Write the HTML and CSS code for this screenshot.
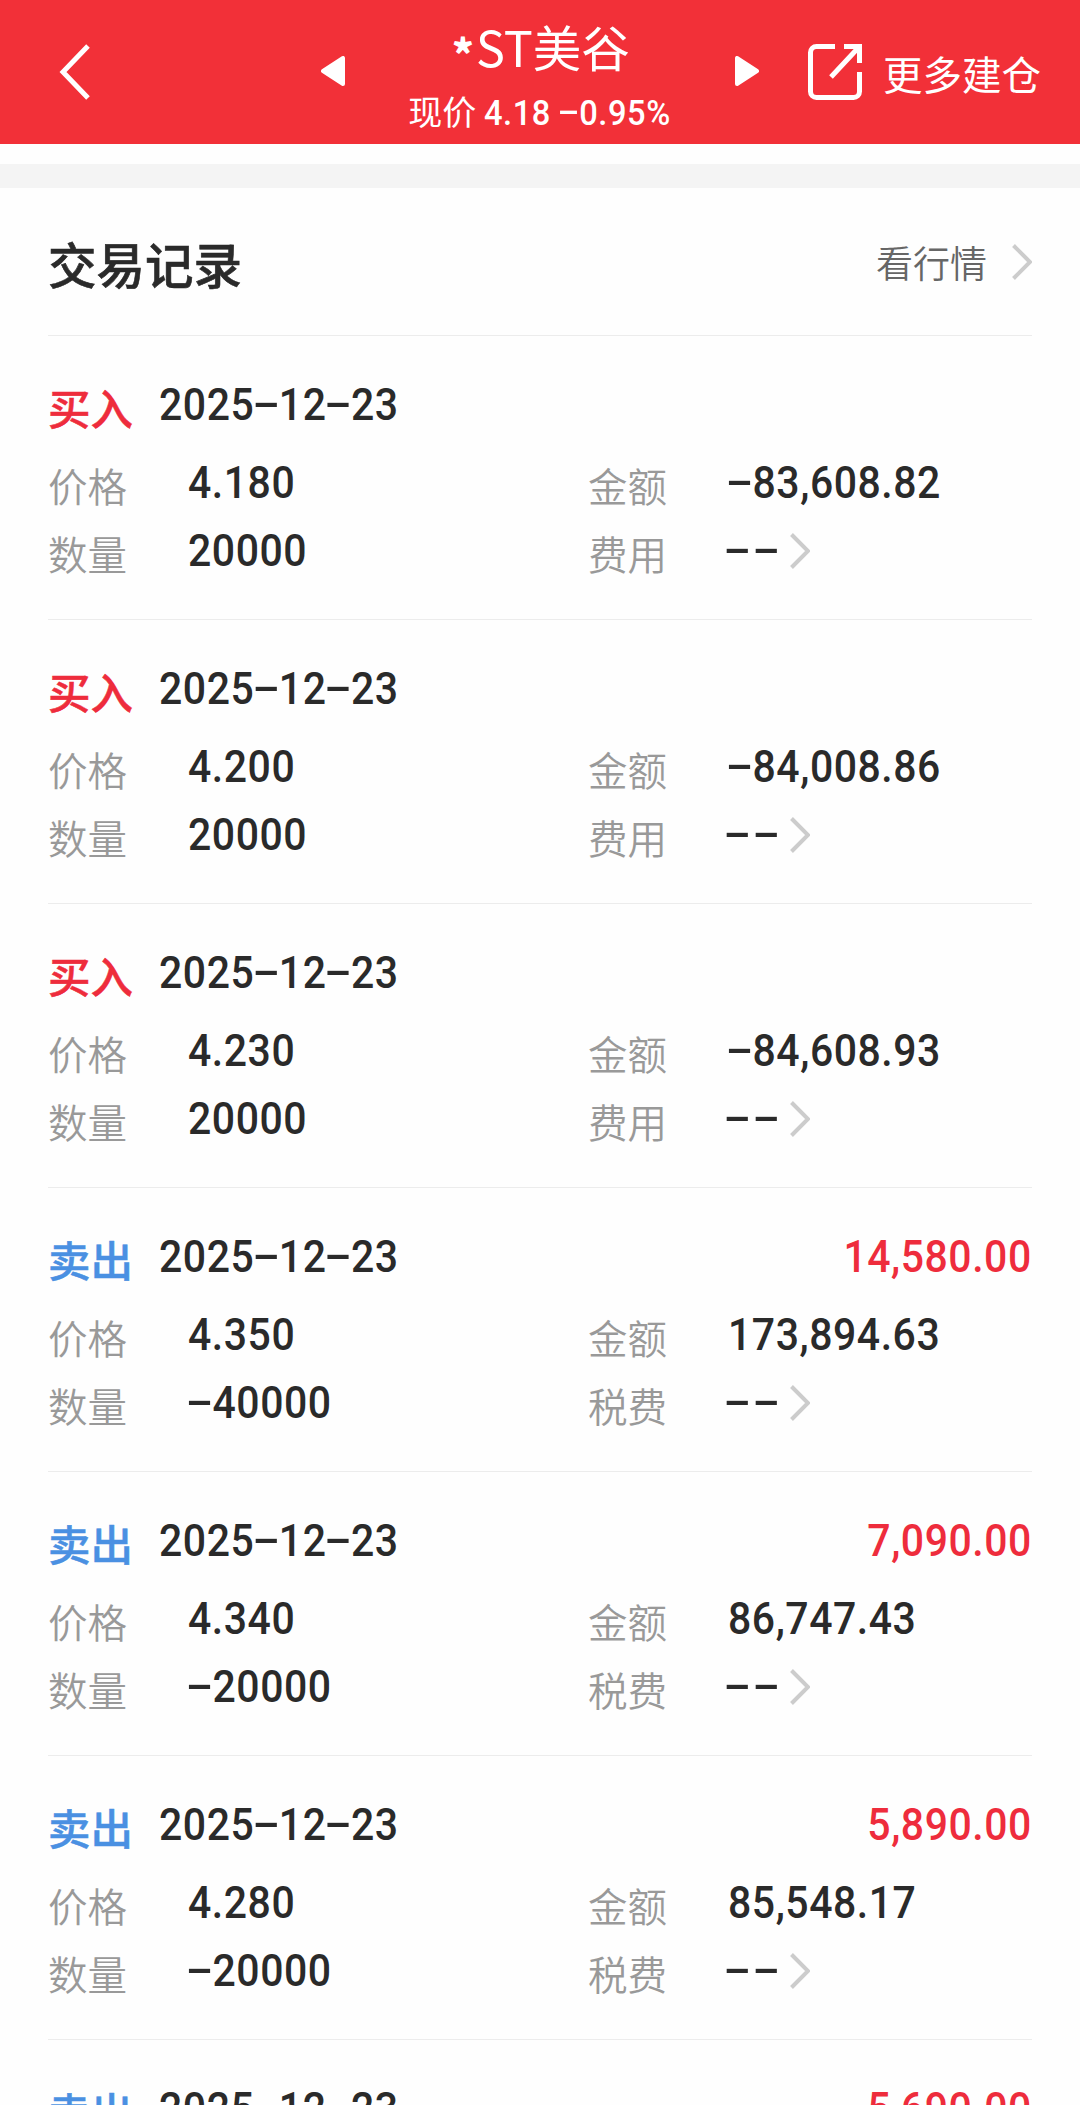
FILE: index.html
```html
<!DOCTYPE html>
<html lang="zh-CN">
	<head>
		<meta charset="utf-8" />
		<meta name="viewport" content="width=device-width, initial-scale=1" />
		<title>*ST美谷 交易记录</title>
		<link rel="stylesheet" href="styles.css">
	</head>
	<body>
		<header>
			<svg class="back" width="32" height="56" viewBox="0 0 32 56"><path d="M29 2 4 28 29 54" /></svg>
			<svg class="arrow prev" width="24" height="30" viewBox="0 0 24 30"><path d="M22 2v26L2 15z" /></svg>
			<div class="stock">
				<h1><span class="star">*</span>ST美谷</h1>
				<p>现价 <b>4.18 <span class="dash">-</span>0.95%</b></p>
			</div>
			<svg class="arrow next" width="24" height="30" viewBox="0 0 24 30"><path d="M2 2v26L22 15z" /></svg>
			<svg class="open" width="54" height="56" viewBox="0 0 54 56"><path d="M27 2.500H8.500a6 6 0 0 0-6 6v39a6 6 0 0 0 6 6h37a6 6 0 0 0 6-6V28M36 2.500h15.500V19M51 3 23 33" /></svg>
			<span class="more">更多建仓</span>
		</header>

		<main>
			<div class="head">
				<h2>交易记录</h2>
				<a>看行情</a>
				<svg class="chevron" width="20" height="36" viewBox="0 0 20 36"><path d="M1.500 1.500 18 18 1.500 34.500" /></svg>
			</div>
			<div id="records"></div>
		</main>

<script>
const records = [
	{ type: 'buy', price: '4.180', count: '20000', amount: '-83,608.82' },
	{ type: 'buy', price: '4.200', count: '20000', amount: '-84,008.86' },
	{ type: 'buy', price: '4.230', count: '20000', amount: '-84,608.93' },
	{ type: 'sell', price: '4.350', count: '-40000', amount: '173,894.63', profit: '14,580.00' },
	{ type: 'sell', price: '4.340', count: '-20000', amount: '86,747.43', profit: '7,090.00' },
	{ type: 'sell', price: '4.280', count: '-20000', amount: '85,548.17', profit: '5,890.00' },
	{ type: 'sell', profit: '5,690.00' },
];

// hyphens are drawn as wide as a digit
function num(s) {
	return s.replace(/-/g, '<span class="dash">-</span>');
}

for (let r of records) {
	let buy = r.type == 'buy';
	let section = document.createElement('section');
	section.innerHTML = `
		<div class="title">
			<strong class="${r.type}">${buy ? '买入' : '卖出'}</strong>
			<time class="num">${num('2025-12-23')}</time>
			<span class="num profit">${r.profit || ''}</span>
		</div>`;
	if (r.price) {
		section.innerHTML += `
		<dl>
			<dt>价格</dt><dd><span class="num">${num(r.price)}</span></dd>
			<dt>金额</dt><dd><span class="num">${num(r.amount)}</span></dd>
			<dt>数量</dt><dd><span class="num">${num(r.count)}</span></dd>
			<dt>${buy ? '费用' : '税费'}</dt><dd><span class="num"><span class="dash double">--</span></span><svg class="chevron" width="20" height="36" viewBox="0 0 20 36"><path d="M1.500 1.500 18 18 1.500 34.500" /></svg></dd>
		</dl>`;
	}
	document.getElementById('records').appendChild(section);
}
</script>
	</body>
</html>
```
FILE: styles.css
```css
* {
	margin: 0;
	padding: 0;
	box-sizing: border-box;
}

html {
	--red: #f23038;
	--up: #ee2c3c;
	--down: #4a90e2;
	--text: #2a2a2a;
}

body {
	height: 2105px;
	overflow: hidden;
	background: #fefefe;
	color: var(--text);
	font-family: "Noto Sans CJK SC", sans-serif;
}

svg {
	display: block;
	flex: none;
	fill: none;
}

header {
	display: flex;
	align-items: center;
	height: 144px;
	padding-left: 59px;
	background: var(--red);
	color: white;
}

.back {
	stroke: white;
	stroke-width: 5;
}

.arrow {
	fill: white;
	stroke: white;
	stroke-width: 4;
	stroke-linejoin: round;
}

.prev {
	margin: 0 0 2px 230px;
}

.next {
	margin-bottom: 2px;
}

.stock {
	width: 390px;
	height: 144px;
	padding-top: 10px;
	text-align: center;
	white-space: nowrap;
}

.stock h1 {
	font-size: 48.5px;
	font-weight: 400;
	line-height: 72px;
}

.star {
	display: inline-block;
	font-weight: 900;
	transform: translateY(6px) scale(0.85);
}

.stock p {
	font-size: 34px;
	line-height: 58px;
}

.stock b {
	display: inline-block;
	margin-right: -15px;
	font-family: Roboto, sans-serif;
	font-size: 35.5px;
	font-weight: 500;
	letter-spacing: 0.6px;
	transform: scaleX(0.92);
	transform-origin: left;
}

.open {
	margin-left: 49px;
	stroke: white;
	stroke-width: 5;
}

.more {
	margin-left: 21px;
	font-size: 39.5px;
	line-height: 60px;
	padding-top: 2px;
}

main {
	margin-top: 20px;
	border-top: 24px solid #f4f4f4;
	padding: 0 48px;
}

.head {
	display: flex;
	align-items: center;
	height: 148px;
	border-bottom: 1px solid #ececec;
}

.head h2 {
	flex: 1;
	padding-top: 3px;
	font-size: 48.5px;
	font-weight: 500;
	line-height: 72px;
	-webkit-text-stroke: 0.6px;
}

.head a {
	margin-right: 25px;
	color: #666;
	font-size: 37px;
	font-weight: 350;
}

.chevron {
	stroke: #ccc;
	stroke-width: 4;
}

.num {
	font-family: Roboto, sans-serif;
	font-size: 44.5px;
	font-weight: 500;
	line-height: 62px;
	letter-spacing: 0.6px;
	transform: scaleX(0.92);
	transform-origin: left;
}

.dash {
	display: inline-block;
	width: 0.6em;
	text-align: center;
	transform: translateY(-0.05em) scaleX(2);
}

.dash.double {
	width: 1.2em;
}

section {
	height: 284px;
	padding-top: 38px;
	border-bottom: 1px solid #ececec;
}

section:last-child {
	height: 65px;
	border: 0;
}

.title {
	display: flex;
	height: 78px;
}

.title strong {
	width: 111px;
	font-size: 42.5px;
	font-weight: 500;
	line-height: 66px;
	-webkit-text-stroke: 0.5px;
}

.buy {
	color: var(--up);
}

.sell {
	color: var(--down);
}

.profit {
	margin-left: auto;
	color: var(--up);
	transform-origin: right;
}

dl {
	display: grid;
	grid-template-columns: 140px 400px 140px 1fr;
	grid-auto-rows: 68px;
}

dt {
	color: #999;
	font-size: 39.5px;
	font-weight: 350;
	line-height: 66px;
}

dd {
	display: flex;
}

dd .chevron {
	margin: 13px 0 0 9px;
}
```
